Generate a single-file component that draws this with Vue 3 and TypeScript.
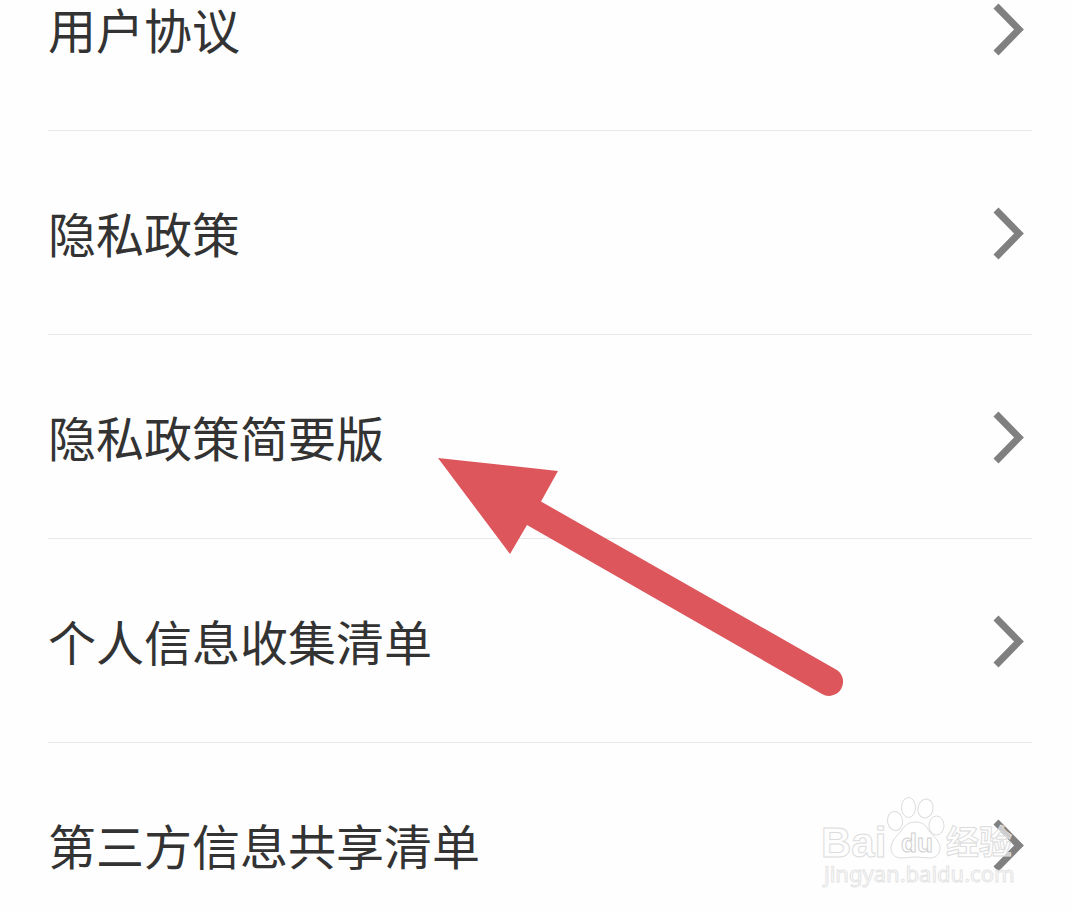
<script setup lang="ts">
interface Entry {
  id: string
  label: string
}

const entries: Entry[] = [
  { id: 'agreement', label: '用户协议' },
  { id: 'privacy', label: '隐私政策' },
  { id: 'privacy-brief', label: '隐私政策简要版' },
  { id: 'collection', label: '个人信息收集清单' },
  { id: 'sharing', label: '第三方信息共享清单' },
]
</script>

<template>
  <main class="page">
    <nav class="list">
      <a v-for="entry in entries" :key="entry.id" class="row" :href="`#${entry.id}`">
        <span class="label">{{ entry.label }}</span>
        <svg class="chevron" viewBox="0 0 32 56" aria-hidden="true">
          <path d="M4 5 27 28.500 4 52" />
        </svg>
      </a>
    </nav>

    <svg class="arrow" viewBox="0 0 406 238" aria-hidden="true">
      <path d="M0 0 120 13 103 43.500 398 211.500A14 14 0 0 1 384 236L89 67 72 96Z" />
    </svg>

    <svg class="watermark" viewBox="0 0 200 100" role="img" aria-label="Baidu 经验">
      <text class="brand" x="-1" y="62">Bai</text>
      <g>
        <ellipse cx="73" cy="26" rx="7.500" ry="9.500" transform="rotate(-8 73 26)" />
        <ellipse cx="86.500" cy="12.500" rx="7" ry="10" />
        <ellipse cx="103.500" cy="13.500" rx="7.500" ry="9.500" transform="rotate(12 103.500 13.500)" />
        <ellipse cx="114.500" cy="30.500" rx="7.500" ry="9.500" />
        <path d="M94 27C87 27 83 30 79 36C75 41 69 46 69 53C69 59 73 63 79 63C85 63 89 62 94 62C99 62 103 63 108 63C114 63 118 59 118 53C118 46 111 41 107 36C104 30 100 27 94 27Z" />
      </g>
      <text class="du" x="79" y="57">du</text>
      <text class="product" x="124" y="59">经验</text>
      <text class="site" x="2" y="87">jingyan.baidu.com</text>
    </svg>
  </main>
</template>

<style>
body {
  margin: 0;
  background: #fefefe;
}
</style>

<style scoped>
.page {
  position: relative;
  height: 100vh;
  overflow: hidden;
  background: #fefefe;
  font-family: "Noto Sans CJK SC", sans-serif;
}

/* The list is scrolled part of the way through its first row. */
.list {
  display: flex;
  flex-direction: column;
  margin: -73px 40px 0 48px;
}

.row {
  display: flex;
  align-items: center;
  justify-content: space-between;
  box-sizing: border-box;
  height: 204px;
  padding-right: 8px;
  border-bottom: 1px solid #e8e8e8;
  color: #333;
  text-decoration: none;
}

.label {
  padding-bottom: 2px;
  font-size: 48px;
  line-height: 72px;
}

.chevron {
  width: 32px;
  height: 56px;
}

.chevron path {
  fill: none;
  stroke: #808080;
  stroke-width: 7;
}

.arrow {
  position: absolute;
  top: 458px;
  left: 438px;
  width: 406px;
  height: 238px;
  fill: #dc565c;
}

.watermark {
  position: absolute;
  right: 50px;
  bottom: 17px;
  width: 200px;
  height: 100px;
  overflow: visible;
  fill: rgba(255, 255, 255, 0.6);
  stroke: #dcdcdc;
  stroke-width: 1;
}

.brand {
  font: bold 42px "Liberation Sans", sans-serif;
}

.du {
  font: bold 26px "Liberation Sans", sans-serif;
  stroke: #d0d0d0;
}

.product {
  font: bold 33px "Noto Sans CJK SC", sans-serif;
}

.site {
  font: 22px "Noto Sans", sans-serif;
  stroke: #e4e4e4;
}
</style>
